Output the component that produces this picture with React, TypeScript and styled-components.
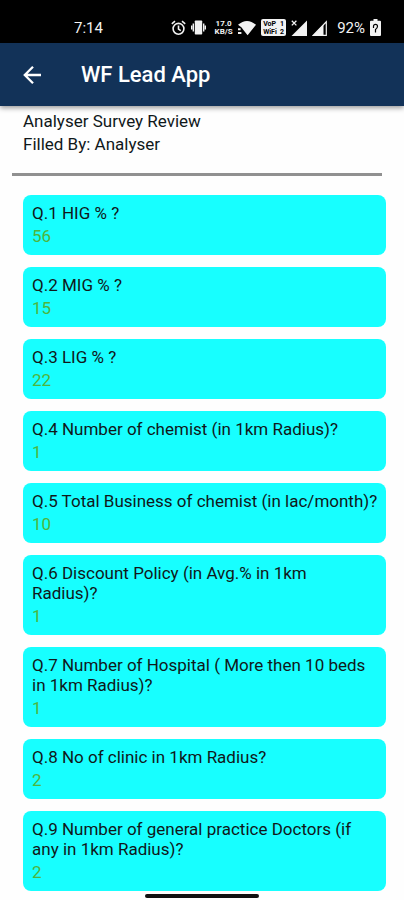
import React from "react";
import styled, { createGlobalStyle } from "styled-components";

const GlobalStyle = createGlobalStyle`
  * { box-sizing: border-box; }
  body { margin: 0; background: #fefefe; font-family: Roboto, "Noto Sans", sans-serif; color: #10181a; }
`;

const Screen = styled.div`
  min-height: 100vh;
  display: flex;
  flex-direction: column;
`;

const StatusBar = styled.div`
  display: flex;
  align-items: center;
  justify-content: space-between;
  height: 43px;
  padding: 12px 23px 0 74px;
  background: #000;
  color: #f2f2f2;
  font-size: 15px;
  line-height: 18px;
`;

const StatusIcons = styled.div`
  display: flex;
  align-items: center;
  gap: 5px;
`;

const StatusLabel = styled.span`
  padding-left: 5px;
`;

const NetSpeed = styled.span`
  display: flex;
  flex-direction: column;
  align-items: center;
  width: 22px;
  padding-left: 3px;
  font-size: 8px;
  line-height: 8px;
  font-weight: 700;
`;

const VoWifi = styled.span`
  display: flex;
  flex-direction: column;
  width: 25px;
  height: 17px;
  padding: 1px 2px;
  border-radius: 2px;
  background: #f2f2f2;
  color: #000;
  font-size: 7px;
  line-height: 8px;
  font-weight: 700;
`;

const VoLine = styled.span`
  display: flex;
  justify-content: space-between;
`;

const AppBar = styled.header`
  display: flex;
  align-items: center;
  gap: 36px;
  height: 63px;
  padding: 0 20px;
  background: #123258;
  color: #fff;
  box-shadow: 0 2px 5px rgba(0, 0, 0, 0.4);
`;

const BackButton = styled.button`
  display: flex;
  padding: 0;
  border: 0;
  background: none;
  color: inherit;
  cursor: pointer;
`;

const Title = styled.h1`
  margin: 0;
  font-size: 22px;
  line-height: 28px;
  font-weight: 500;
`;

const Summary = styled.section`
  display: flex;
  flex-direction: column;
  gap: 3px;
  margin: 0 22px 0 12px;
  padding: 5px 11px 19px;
  border-bottom: 3px solid #909090;
`;

const Text = styled.p<{ $color?: string }>`
  margin: 0;
  font-size: 17px;
  line-height: 20px;
  white-space: pre-line;
  color: ${(p) => p.$color ?? "inherit"};
`;

const Questions = styled.main`
  display: flex;
  flex-direction: column;
  gap: 12px;
  padding: 19px 18px 0 23px;
`;

const Card = styled.article`
  display: flex;
  flex-direction: column;
  gap: 3px;
  padding: 8px 7px 9px 9px;
  border-radius: 8px;
  background: #17ffff;
`;

const NavArea = styled.footer`
  display: flex;
  justify-content: center;
  padding: 3px 0 2px;
`;

const NavHandle = styled.div`
  width: 28%;
  height: 4px;
  border-radius: 2px;
  background: #111;
`;

const AlarmIcon = () => (
  <svg width="15" height="16" viewBox="0 0 15 16" fill="none" stroke="#f2f2f2" strokeWidth="1.6">
    <circle cx="7.5" cy="8.8" r="5.4" />
    <path d="M7.5 5.6v3.5l2.3 1.5M.8 3.8 4 1.2M14.2 3.8 11 1.2" />
  </svg>
);

const VibrateIcon = () => (
  <svg width="15" height="15" viewBox="0 0 15 15" fill="#f2f2f2">
    <rect x="3.8" y="0.5" width="7.4" height="14" rx="0.8" />
    <path d="M1.6 3.5H3v8H1.6zM0 5.5h1.3v4H0zM12 3.5h1.4v8H12zM13.7 5.5H15v4h-1.3z" />
  </svg>
);

const WifiIcon = () => (
  <svg width="18" height="16" viewBox="0 0 18 16" fill="#f2f2f2">
    <path d="M0 4.8Q9-2.8 18 4.8L9.6 15.2 5.2 9.8 3.6 7.4z" />
    <path d="M0 8.2h2.6v2H0zM0 12h3.4v2H0z" />
  </svg>
);

const SignalOffIcon = () => (
  <svg width="16" height="16" viewBox="0 0 16 16" fill="#f2f2f2">
    <path d="M16 .5V16H.5z" />
    <path d="M.8.8l4.6 4.6M5.4.8.8 5.4" stroke="#f2f2f2" strokeWidth="1.3" />
  </svg>
);

const SignalIcon = () => (
  <svg width="15" height="16" viewBox="0 0 15 16">
    <path d="M14.3 1.8v13.5H1.2z" fill="none" stroke="#f2f2f2" strokeWidth="1.2" />
    <path d="M11.5 4.5V16H.5z" fill="#f2f2f2" />
  </svg>
);

const BatteryIcon = () => (
  <svg width="11" height="17" viewBox="0 0 11 17">
    <path d="M3.5 0h4v1.8H10q1 0 1 1V16q0 1-1 1H1q-1 0-1-1V2.8q0-1 1-1h2.5z" fill="#f2f2f2" />
    <path d="M3.5 9V7.3q0-2 2-2t2 2q0 1.9-2 3.2v3" fill="none" stroke="#000" strokeWidth="1.2" />
  </svg>
);

const BackIcon = () => (
  <svg width="25" height="24" viewBox="0 0 25 24" fill="none" stroke="currentColor" strokeWidth="2.3">
    <path d="M21 12H4.8M13 3.8 4.8 12l8.2 8.2" />
  </svg>
);

const questions = [
  { text: "Q.1 HIG % ?", answer: "56" },
  { text: "Q.2 MIG % ?", answer: "15" },
  { text: "Q.3 LIG % ?", answer: "22" },
  { text: "Q.4 Number of chemist (in 1km Radius)?", answer: "1" },
  { text: "Q.5 Total Business of chemist (in lac/month)?", answer: "10" },
  { text: "Q.6 Discount Policy (in Avg.% in 1km\nRadius)?", answer: "1" },
  { text: "Q.7 Number of Hospital ( More then 10 beds in 1km Radius)?", answer: "1" },
  { text: "Q.8 No of clinic in 1km Radius?", answer: "2" },
  { text: "Q.9 Number of general practice Doctors (if any in 1km Radius)?", answer: "2" },
];

export default function App() {
  return (
    <Screen>
      <GlobalStyle />
      <StatusBar>
        <span>7:14</span>
        <StatusIcons>
          <AlarmIcon />
          <VibrateIcon />
          <NetSpeed>
            <span>17.0</span>
            <span>KB/S</span>
          </NetSpeed>
          <WifiIcon />
          <VoWifi>
            <VoLine><span>VoP</span><span>1</span></VoLine>
            <VoLine><span>WiFi</span><span>2</span></VoLine>
          </VoWifi>
          <SignalOffIcon />
          <SignalIcon />
          <StatusLabel>92%</StatusLabel>
          <BatteryIcon />
        </StatusIcons>
      </StatusBar>
      <AppBar>
        <BackButton type="button" aria-label="Back">
          <BackIcon />
        </BackButton>
        <Title>WF Lead App</Title>
      </AppBar>
      <Summary>
        <Text>Analyser Survey Review</Text>
        <Text>Filled By: Analyser</Text>
      </Summary>
      <Questions>
        {questions.map((q) => (
          <Card key={q.text}>
            <Text>{q.text}</Text>
            <Text $color="#4fb53c">{q.answer}</Text>
          </Card>
        ))}
      </Questions>
      <NavArea>
        <NavHandle />
      </NavArea>
    </Screen>
  );
}
